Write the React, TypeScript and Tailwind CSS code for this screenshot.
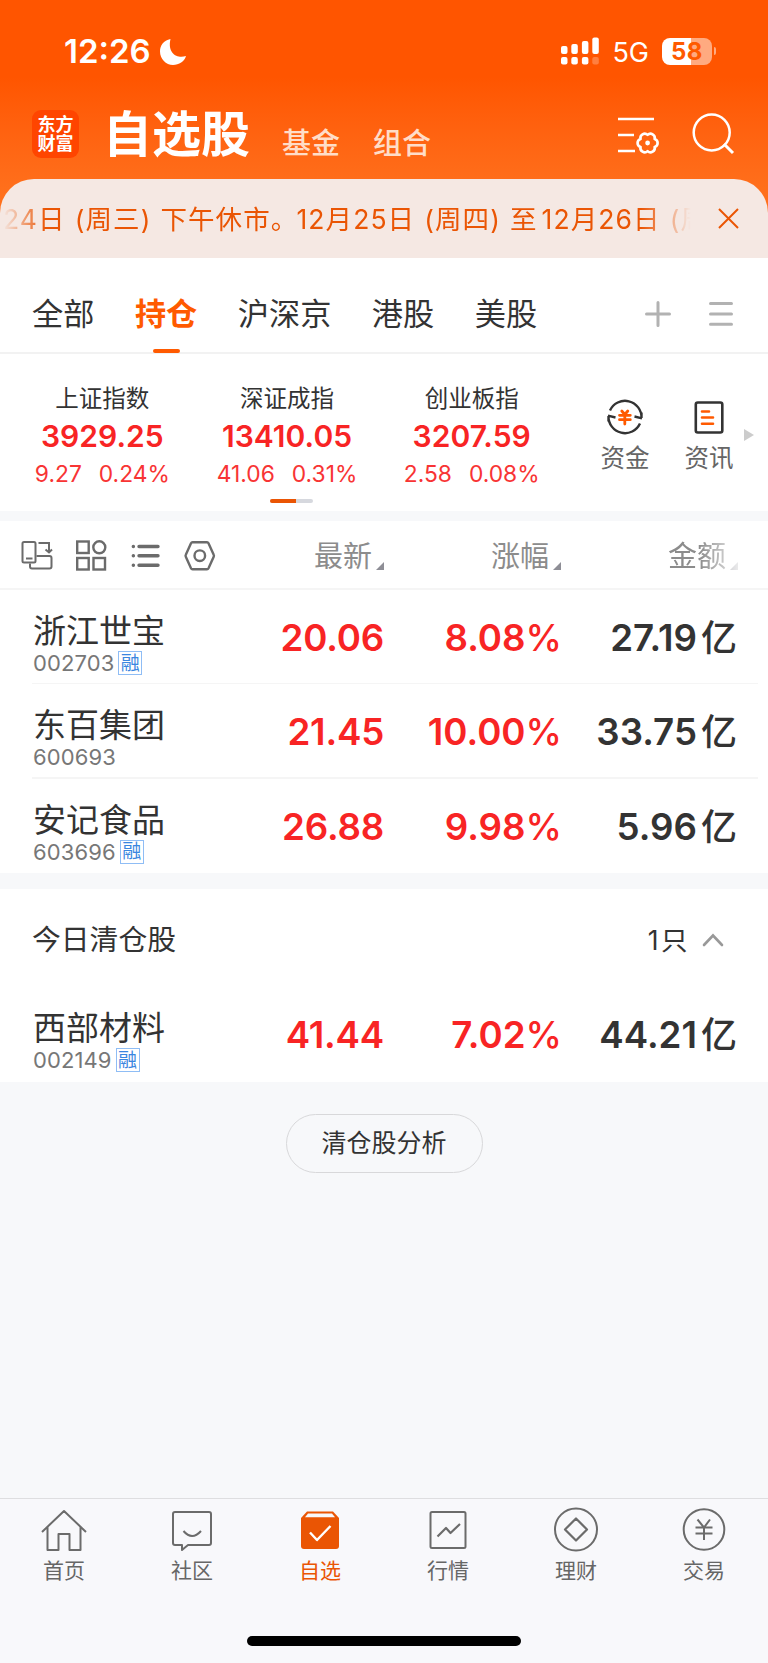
import React from 'react'

type Stock = {
  name: string
  code: string
  margin?: boolean
  price: string
  rate: string
  amount: string
}

const tabs = ['全部', '持仓', '沪深京', '港股', '美股']

const indexes = [
  { name: '上证指数', value: '3929.25', diff: '9.27', rate: '0.24%' },
  { name: '深证成指', value: '13410.05', diff: '41.06', rate: '0.31%' },
  { name: '创业板指', value: '3207.59', diff: '2.58', rate: '0.08%' },
]

const stocks: Stock[] = [
  { name: '浙江世宝', code: '002703', margin: true, price: '20.06', rate: '8.08', amount: '27.19' },
  { name: '东百集团', code: '600693', price: '21.45', rate: '10.00', amount: '33.75' },
  { name: '安记食品', code: '603696', margin: true, price: '26.88', rate: '9.98', amount: '5.96' },
]

const cleared: Stock[] = [
  { name: '西部材料', code: '002149', margin: true, price: '41.44', rate: '7.02', amount: '44.21' },
]

function StatusBar() {
  return (
    <div className="flex h-[102px] items-center pl-[64px] pr-[52px] text-white">
      <span className="mt-[1px] text-[33px] font-semibold leading-none">12:26</span>
      <svg className="ml-[8px] mt-[2px]" width="28" height="28" viewBox="0 0 28 28" fill="#fff">
        <path d="M11.5 1C4.5 2.500 1 7.500 1 13.500C1 21 7 27 14 27C20 27 25.500 23.500 27 18C19 21 8 16 11.500 1Z" />
      </svg>
      <svg className="ml-auto" width="40" height="28" viewBox="0 0 40 28" fill="#fff">
        <rect x="1" y="9" width="6.500" height="8" rx="2" />
        <rect x="11.300" y="7" width="6.500" height="10" rx="2" />
        <rect x="21.900" y="4" width="6.500" height="13" rx="2" />
        <rect x="32.300" y="0.500" width="6.500" height="16.500" rx="2" />
        <rect x="1" y="20" width="6.500" height="7.500" rx="2" />
        <rect x="11.300" y="20" width="6.500" height="7.500" rx="2" />
        <rect x="21.900" y="20" width="6.500" height="7.500" rx="2" />
        <rect x="32.300" y="20" width="6.500" height="7.500" rx="2" opacity="0.25" />
      </svg>
      <span className="ml-[12px] mt-[2px] text-[27px] leading-none">5G</span>
      <div className="ml-[13px] flex h-[27px] w-[50px] items-center justify-center rounded-[8px] bg-linear-to-r from-white from-58% to-[#ffaa80] to-58% pt-[2px] text-[24px] font-bold leading-none tracking-[0.500px] text-[#ff5a00]">
        58
      </div>
      <div className="ml-[2px] h-[8px] w-[2px] rounded-r-full bg-[#ffaa80]" />
    </div>
  )
}

function Header() {
  return (
    <div className="flex h-[77px] items-start pl-[32px] pr-[33px] text-white">
      <div className="mt-[8px] flex h-[48px] w-[47px] flex-col items-center justify-center rounded-[9px] bg-[#ff4500] text-[18px] font-bold leading-[19.500px]">
        <span>东方</span>
        <span>财富</span>
      </div>
      <span className="ml-[24px] mt-[3px] text-[49px] font-bold leading-[60px]">自选股</span>
      <span className="ml-[32px] mt-[21px] text-[29px] font-medium leading-[42px] text-[#ffddc8]">基金</span>
      <span className="ml-[33px] mt-[21px] text-[29px] font-medium leading-[42px] text-[#ffddc8]">组合</span>
      <svg className="ml-auto mt-[13px]" width="44" height="42" viewBox="0 0 44 42" fill="none" stroke="#fff" strokeWidth="2.600">
        <path d="M2 4H38M2 20H18M2 36H19" />
        <path
          transform="translate(31.600 28) scale(0.94)"
          strokeLinejoin="round"
          strokeWidth="2.800"
          d="M7.500 4.300A4.500 4.500 0 0 1 0 8.600A4.500 4.500 0 0 1 -7.500 4.300A4.500 4.500 0 0 1 -7.500 -4.300A4.500 4.500 0 0 1 0 -8.600A4.500 4.500 0 0 1 7.500 -4.300A4.500 4.500 0 0 1 7.500 4.300Z"
        />
        <circle cx="31.600" cy="28" r="2.400" fill="#fff" stroke="none" />
      </svg>
      <svg className="ml-[31px] mt-[10px]" width="44" height="44" viewBox="0 0 44 44" fill="none" stroke="#fff" strokeWidth="2.500">
        <circle cx="20.700" cy="20.500" r="18" />
        <path d="M33 32L42 41" strokeWidth="3" />
      </svg>
    </div>
  )
}

function Notice() {
  return (
    <div className="flex h-[79px] items-center rounded-t-[34px] bg-[#f5e8e3]">
      <div className="ml-[3px] w-[709px] shrink-0 overflow-hidden whitespace-nowrap text-[26.500px] leading-[40px] tracking-[1.100px] text-[#ea5504] mask-r-from-90% mask-r-to-97% mask-l-from-94% mask-l-to-100%">
        <span>24日</span>
        <span className="ml-[9px]">(周三)</span>
        <span className="ml-[9px]">下午休市。</span>
        <span className="-ml-[2px]">12月25日</span>
        <span className="ml-[9px]">(周四)</span>
        <span className="ml-[9px]">至</span>
        <span className="ml-[4px]">12月26日</span>
        <span className="ml-[9px]">(周</span>
      </div>
      <svg className="ml-[6px]" width="21" height="21" viewBox="0 0 21 21" stroke="#ea5504" strokeWidth="2">
        <path d="M1 1L20 20M20 1L1 20" />
      </svg>
    </div>
  )
}

function TabRow() {
  return (
    <div className="flex h-[96px] items-start border-b-2 border-[#f2f2f2] bg-white pl-[32px] pr-[35px]">
      {tabs.map((tab) => (
        <div
          key={tab}
          className={
            tab === '持仓'
              ? 'mr-[40.500px] flex h-[96px] flex-col items-center pt-[33px] text-[31.200px] font-bold leading-[46px] text-[#ff5a00]'
              : 'mr-[40.500px] pt-[33px] text-[31.200px] leading-[46px] text-[#333]'
          }
        >
          {tab}
          {tab === '持仓' && <div className="mt-[12px] h-[4px] w-[27px] rounded-[2px] bg-[#ff5a00]" />}
        </div>
      ))}
      <svg className="ml-auto mt-[43px]" width="26" height="26" viewBox="0 0 26 26" stroke="#b2b2b2" strokeWidth="3" strokeLinecap="round">
        <path d="M1.500 13H24.500M13 1.500V24.500" />
      </svg>
      <svg className="ml-[38px] mt-[43px]" width="24" height="26" viewBox="0 0 24 26" stroke="#b2b2b2" strokeWidth="3" strokeLinecap="round">
        <path d="M1.500 2.500H22.500M1.500 13H22.500M1.500 23.300H22.500" />
      </svg>
    </div>
  )
}

function IndexPanel() {
  return (
    <div className="h-[157px] bg-white">
      <div className="flex h-[145px] pl-[10px]">
        {indexes.map((item) => (
          <div key={item.name} className="flex w-[184.700px] flex-col items-center whitespace-nowrap pt-[27px]">
            <div className="text-[23.500px] leading-[36px] text-[#333]">{item.name}</div>
            <div className="-mt-[1px] text-[30px] font-semibold leading-[40px] tracking-[0.050px] text-[#f82424]">{item.value}</div>
            <div className="flex gap-[17px] text-[22.800px] leading-[36px] text-[#f83434]">
              <span>{item.diff}</span>
              <span>{item.rate}</span>
            </div>
          </div>
        ))}
        <div className="ml-[19px] flex w-[84px] flex-col items-center pt-[44px] text-[24.500px] leading-[36px] text-[#666]">
          <svg width="38" height="38" viewBox="0 0 38 38" fill="none" stroke="#333" strokeWidth="2.400">
            <path d="M4 12.500A16.500 16.500 0 0 1 35.500 20M35.500 20V14.500M36 20.300L28.500 18.500" />
            <path d="M34 25.500A16.500 16.500 0 0 1 2.500 18M2.500 18V23.500M2 17.700L9.500 19.500" />
            <g stroke="#ff5a00" strokeWidth="2.800" strokeLinecap="round">
              <path d="M15.800 13L18.800 16.500L21.800 13M18.800 17V26M13.500 17.300H24.300M13.500 21.700H24.300" />
            </g>
          </svg>
          <div className="mt-[4px]">资金</div>
        </div>
        <div className="flex w-[84px] flex-col items-center pt-[44px] text-[24.500px] leading-[36px] text-[#666]">
          <svg width="38" height="38" viewBox="0 0 38 38" fill="none" stroke="#333" strokeWidth="2.600">
            <rect x="5.800" y="4.500" width="26.500" height="30" rx="2" />
            <path d="M12 13.500H19M12 19.500H23M12 25.800H23" stroke="#ff5a00" strokeLinecap="round" />
          </svg>
          <div className="mt-[4px]">资讯</div>
        </div>
        <svg className="-ml-[7px] mt-[75px]" width="10" height="12" viewBox="0 0 10 12" fill="#ccc">
          <path d="M0 0L10 6L0 12Z" />
        </svg>
      </div>
      <div className="ml-[270px] flex h-[4px] w-[43px] overflow-hidden rounded-full bg-[#d6d8de]">
        <div className="w-[26px] bg-[#ea5504]" />
      </div>
    </div>
  )
}

function SortMark() {
  return (
    <svg className="mb-[9px] ml-[4px] self-end" width="8" height="8" viewBox="0 0 8 8" fill="#8e8e96">
      <path d="M8 0V8H0Z" />
    </svg>
  )
}

function Toolbar() {
  return (
    <div className="flex h-[69px] items-center border-b-2 border-[#f5f5f5] bg-white pt-[4px] text-[29px] leading-[44px] text-[#8c8c8c]">
      <svg className="ml-[21px]" width="200" height="34" viewBox="0 0 200 34" fill="none" stroke="#6b6b6b" strokeWidth="2.400">
        {/* rotate layout */}
        <g strokeWidth="2">
          <rect x="1.500" y="2" width="13" height="20.500" rx="1.500" />
          <path d="M5 18.500H11.500" />
          <path d="M17.500 3H28V12M24.500 9.500L28 12.500L31 9.500M15.500 16H28.500Q30.500 16 30.500 18V26.500Q30.500 28.500 28.500 28.500H11Q9 28.500 9 26.500V23.500" />
        </g>
        {/* grid view */}
        <rect x="56.200" y="1.500" width="11.500" height="11.500" />
        <circle cx="78.300" cy="7.300" r="6" />
        <rect x="56.200" y="18" width="11.500" height="11.500" />
        <rect x="72.500" y="18" width="11.500" height="11.500" />
        {/* list view */}
        <path d="M118 6.500H137M118 15.800H137M118 25.200H137" strokeWidth="3.400" strokeLinecap="round" />
        <path d="M112.300 6.500H112.400M112.300 15.800H112.400M112.300 25.200H112.400" strokeWidth="3.400" strokeLinecap="round" />
        {/* settings */}
        <g transform="translate(0 -0.800)">
          <path strokeLinejoin="round" d="M171.500 3H186Q187 3 187.500 4L192.700 15.500Q193.200 16.500 192.700 17.500L187.500 29Q187 30 186 30H171.500Q170.500 30 170 29L164.800 17.500Q164.300 16.500 164.800 15.500L170 4Q170.500 3 171.500 3Z" />
          <circle cx="178.800" cy="16.500" r="5.300" />
        </g>
      </svg>
      <div className="flex w-[163px] justify-end">
        最新
        <SortMark />
      </div>
      <div className="flex w-[177px] justify-end">
        涨幅
        <SortMark />
      </div>
      <div className="flex w-[177px] justify-end mask-r-from-78% mask-r-to-105%">
        金额
        <SortMark />
      </div>
    </div>
  )
}

function StockRow({ item }: { item: Stock }) {
  return (
    <div className="flex h-[94.400px] pl-[33px] text-[36.700px] font-semibold leading-[50px]">
      <div className="w-[190px] pt-[18px] font-normal">
        <div className="text-[33px] leading-[46px] text-[#333]">{item.name}</div>
        <div className="-mt-[4px] flex h-[26px] items-center text-[22px] leading-[26px] tracking-[0.100px] text-[#777]">
          {item.code}
          {item.margin && (
            <span className="ml-[4px] flex h-[24px] w-[24px] items-center justify-center border-[1.500px] border-[#8fbdf5] text-[19px] leading-none tracking-normal text-[#3a86e0]">
              融
            </span>
          )}
        </div>
      </div>
      <div className="w-[161px] pt-[23px] text-right tracking-[-0.200px] text-[#f82424]">{item.price}</div>
      <div className="w-[178px] pt-[23px] text-right text-[#f82424]">
        {item.rate}
        <span className="font-medium">%</span>
      </div>
      <div className="flex w-[175px] justify-end pt-[23px] text-[#333]">
        {item.amount}
        <span className="ml-[4px] text-[36px] font-medium">亿</span>
      </div>
    </div>
  )
}

function StockList({ list }: { list: Stock[] }) {
  return (
    <div className="bg-white">
      {list.map((item, i) => (
        <div key={item.code} className="relative">
          <StockRow item={item} />
          {i < list.length - 1 && <div className="absolute bottom-0 left-[32px] right-[10px] h-[1.500px] bg-[#f5f5f5]" />}
        </div>
      ))}
    </div>
  )
}

const navItems = [
  {
    label: '首页',
    icon: <path d="M2 23L24 2L46 23M7.500 18V41H18.500V25H29.500V41H40.500V18" />,
  },
  {
    label: '社区',
    icon: (
      <>
        <path d="M7 3H41Q43 3 43 5V34Q43 36 41 36H20L14 41V36H7Q5 36 5 34V5Q5 3 7 3Z" />
        <path d="M15.500 22Q24 32 33 22" />
      </>
    ),
  },
  {
    label: '自选',
    icon: (
      <>
        <path d="M11 2.500H37L43 9V37Q43 40 40 40H8Q5 40 5 37V9Z" fill="#ea5504" stroke="none" />
        <path d="M12 4.500H36L39 8.300H9Z" fill="#f8f8fb" stroke="none" />
        <path d="M14 23.500L21 31L34.500 17" stroke="#fff" strokeWidth="2.400" />
      </>
    ),
  },
  {
    label: '行情',
    icon: (
      <>
        <rect x="6.500" y="3" width="35" height="36" rx="1.500" />
        <path d="M13.500 27.500L22 19L26.500 24L36 15" strokeWidth="2.200" />
      </>
    ),
  },
  {
    label: '理财',
    icon: (
      <>
        <circle cx="24" cy="20.500" r="21" />
        <path d="M24 9.500L35 20.500L24 31.500L13 20.500Z" strokeWidth="2.200" />
      </>
    ),
  },
  {
    label: '交易',
    icon: (
      <>
        <circle cx="24" cy="20.500" r="20.300" />
        <path d="M17.500 10.500L24 18.500L30 10.500M24 18.500V31M15.500 18.500H32.500M15.500 24.500H32.500" />
      </>
    ),
  },
]

function BottomNav() {
  return (
    <div className="h-[165px] border-t border-[#dedee0] bg-[#f8f8fb]">
      <div className="grid h-[137px] grid-cols-6">
        {navItems.map((item) => (
          <div
            key={item.label}
            className={
              item.label === '自选'
                ? 'flex flex-col items-center text-[21px] leading-[32px] text-[#ea5504]'
                : 'flex flex-col items-center text-[21px] leading-[32px] text-[#666]'
            }
          >
            <svg className="mt-[10px] overflow-visible" width="48" height="44" viewBox="0 0 48 44" fill="none" stroke="#6b6b6b" strokeWidth="2" strokeLinejoin="round">
              {item.icon}
            </svg>
            <div className="mt-[2px]">{item.label}</div>
          </div>
        ))}
      </div>
      <div className="mx-auto h-[10px] w-[274px] rounded-full bg-black" />
    </div>
  )
}

function App() {
  return (
    <div className="flex h-[1663px] w-[768px] flex-col overflow-hidden bg-[#f7f8fa] font-[Inter,'Noto_Sans_CJK_SC',sans-serif]">
      <div className="bg-linear-to-b from-[#ff5500] from-30% to-[#ff701c] to-75%">
        <StatusBar />
        <Header />
        <Notice />
      </div>
      <TabRow />
      <IndexPanel />
      <div className="mt-[10px]">
        <Toolbar />
        <StockList list={stocks} />
      </div>
      <div className="mt-[15.600px] flex h-[98.500px] items-center bg-white pl-[32px] pr-[44px] pt-[3px] text-[28.800px] leading-[44px] text-[#333]">
        今日清仓股
        <span className="ml-auto text-[26.500px] tracking-[2.500px]">1只</span>
        <svg className="ml-[12px]" width="22" height="14" viewBox="0 0 22 14" fill="none" stroke="#999" strokeWidth="2.600" strokeLinecap="round">
          <path d="M2 12L11 2.500L20 12" />
        </svg>
      </div>
      <StockList list={cleared} />
      <button className="mx-auto mt-[32px] h-[59px] w-[197px] rounded-full border-[1.500px] border-[#d8d8da] pt-[1px] text-[25px] text-[#333]">
        清仓股分析
      </button>
      <div className="mt-auto">
        <BottomNav />
      </div>
    </div>
  )
}

export default App
